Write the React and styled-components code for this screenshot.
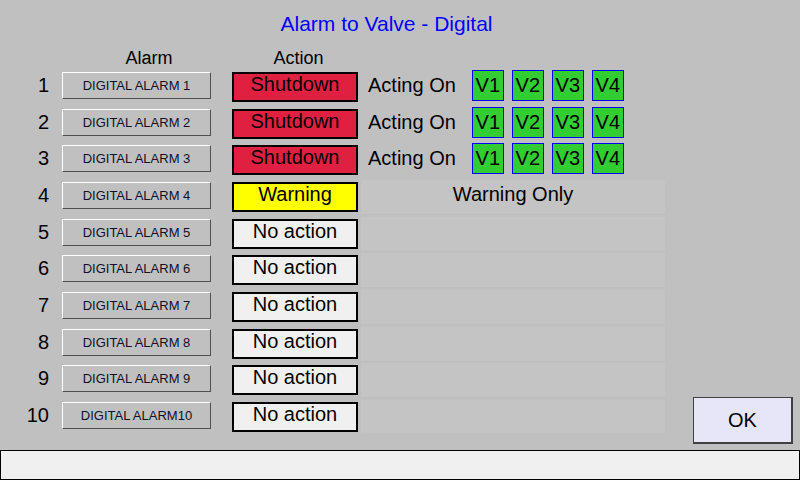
import React from 'react';
import styled, { createGlobalStyle } from 'styled-components';

const GlobalStyle = createGlobalStyle`
  html, body {
    margin: 0;
    padding: 0;
    background: #c0c0c0;
    font-family: "Liberation Sans", Arial, sans-serif;
  }
`;

const rows = [
  { n: 1, alarm: 'DIGITAL ALARM 1', action: 'shutdown' },
  { n: 2, alarm: 'DIGITAL ALARM 2', action: 'shutdown' },
  { n: 3, alarm: 'DIGITAL ALARM 3', action: 'shutdown' },
  { n: 4, alarm: 'DIGITAL ALARM 4', action: 'warning' },
  { n: 5, alarm: 'DIGITAL ALARM 5', action: 'none' },
  { n: 6, alarm: 'DIGITAL ALARM 6', action: 'none' },
  { n: 7, alarm: 'DIGITAL ALARM 7', action: 'none' },
  { n: 8, alarm: 'DIGITAL ALARM 8', action: 'none' },
  { n: 9, alarm: 'DIGITAL ALARM 9', action: 'none' },
  { n: 10, alarm: 'DIGITAL ALARM10', action: 'none' },
];

const actionStyles = {
  shutdown: { label: 'Shutdown', bg: '#e02040' },
  warning: { label: 'Warning', bg: '#ffff00' },
  none: { label: 'No action', bg: '#f0f0f0' },
};

const valves = ['V1', 'V2', 'V3', 'V4'];

const App = () => {
  return (
    <>
      <GlobalStyle />
      <Screen>
        <Title>Alarm to Valve - Digital</Title>
        <Content>
          <Table>
            <HeaderRow>
              <NumberSpacer />
              <AlarmHeader>Alarm</AlarmHeader>
              <ActionHeader>Action</ActionHeader>
            </HeaderRow>
            <Rows>
              {rows.map((row) => {
                const act = actionStyles[row.action];
                return (
                  <Row key={row.n}>
                    <RowNumber>{row.n}</RowNumber>
                    <AlarmButton>{row.alarm}</AlarmButton>
                    <ActionBox $bg={act.bg}>{act.label}</ActionBox>
                    <Panel $plain={row.action === 'shutdown'}>
                      {row.action === 'shutdown' && (
                        <>
                          <ActingLabel>Acting On</ActingLabel>
                          <Valves>
                            {valves.map((v) => (
                              <Valve key={v}>{v}</Valve>
                            ))}
                          </Valves>
                        </>
                      )}
                      {row.action === 'warning' && <PanelNote>Warning Only</PanelNote>}
                    </Panel>
                  </Row>
                );
              })}
            </Rows>
          </Table>
          <Side>
            <OkButton>OK</OkButton>
          </Side>
        </Content>
        <StatusBar />
      </Screen>
    </>
  );
};

const Screen = styled.div`
  width: 800px;
  height: 480px;
  display: flex;
  flex-direction: column;
  background: #c0c0c0;
  overflow: hidden;
`;

const Title = styled.div`
  margin-top: 12px;
  padding-right: 27px;
  height: 24px;
  text-align: center;
  color: #0000ff;
  font-size: 21px;
`;

const Content = styled.div`
  flex: 1;
  display: flex;
`;

const Table = styled.div`
  display: flex;
  flex-direction: column;
`;

const HeaderRow = styled.div`
  display: flex;
  margin-top: 12px;
  height: 22px;
  font-size: 18px;
  color: #000;
`;

const NumberSpacer = styled.div`
  width: 62px;
`;

const AlarmHeader = styled.div`
  width: 149px;
  margin-right: 21px;
  padding-left: 25px;
  box-sizing: border-box;
  text-align: center;
`;

const ActionHeader = styled.div`
  width: 126px;
  padding-left: 7px;
  box-sizing: border-box;
  text-align: center;
`;

const Rows = styled.div`
  display: flex;
  flex-direction: column;
  gap: 1.67px;
`;

const Row = styled.div`
  display: flex;
  align-items: flex-start;
  height: 35px;
`;

const RowNumber = styled.div`
  width: 49px;
  margin: 2px 13px 0 0;
  height: 27px;
  display: flex;
  align-items: center;
  justify-content: flex-end;
  font-size: 20px;
  color: #000;
`;

const AlarmButton = styled.div`
  width: 149px;
  height: 27px;
  margin: 2px 21px 0 0;
  box-sizing: border-box;
  display: flex;
  align-items: center;
  justify-content: center;
  background: #c0c0c0;
  border: 1px solid;
  border-color: #ffffff #505050 #505050 #ffffff;
  font-size: 13px;
  color: #101028;
`;

const ActionBox = styled.div`
  width: 126px;
  height: 30px;
  margin: 2px 3px 0 0;
  box-sizing: border-box;
  border: 2px solid #000;
  background: ${(p) => p.$bg};
  text-align: center;
  font-size: 20px;
  line-height: 20px;
  color: #000;
`;

const Panel = styled.div`
  width: 304px;
  height: 35px;
  box-sizing: border-box;
  display: flex;
  align-items: flex-start;
  justify-content: ${(p) => (p.$plain ? 'flex-start' : 'center')};
  padding-left: ${(p) => (p.$plain ? '7px' : '0')};
  background: ${(p) => (p.$plain ? 'transparent' : '#c4c4c4')};
  border-bottom: 1px solid ${(p) => (p.$plain ? 'transparent' : '#bdbdbd')};
`;

const ActingLabel = styled.div`
  margin-top: 4px;
  font-size: 20px;
  color: #000;
`;

const Valves = styled.div`
  display: flex;
  gap: 8px;
  margin-left: 16px;
`;

const Valve = styled.div`
  width: 32px;
  height: 31px;
  box-sizing: border-box;
  display: flex;
  align-items: center;
  justify-content: center;
  border: 1px solid #0000ff;
  background: #32cd32;
  font-size: 20px;
  color: #000;
`;

const PanelNote = styled.div`
  margin-top: 3px;
  font-size: 20px;
  color: #000;
`;

const Side = styled.div`
  flex: 1;
  display: flex;
  align-items: flex-end;
  padding: 0 0 6px 28px;
`;

const OkButton = styled.div`
  width: 100px;
  height: 47px;
  box-sizing: border-box;
  display: flex;
  align-items: center;
  justify-content: center;
  background: #e6e6f8;
  border: 1px solid #404040;
  border-width: 1px 2px 2px 1px;
  font-size: 20px;
  color: #000;
`;

const StatusBar = styled.div`
  height: 30px;
  box-sizing: border-box;
  background: #f0f0f0;
  border: 1px solid #000;
`;

export default App;
